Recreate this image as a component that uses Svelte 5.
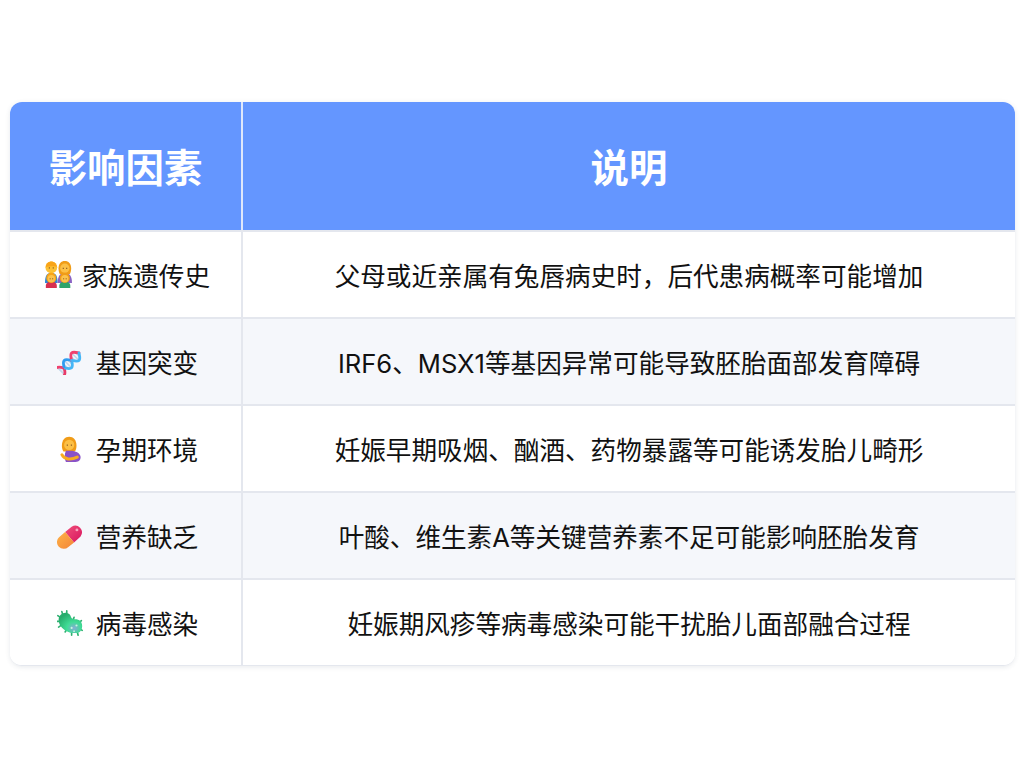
<script>
  const rows = [
    { icon: 'family', name: '家族遗传史', text: '父母或近亲属有兔唇病史时，后代患病概率可能增加' },
    { icon: 'dna', name: '基因突变', text: 'IRF6、MSX1等基因异常可能导致胚胎面部发育障碍' },
    { icon: 'pregnant', name: '孕期环境', text: '妊娠早期吸烟、酗酒、药物暴露等可能诱发胎儿畸形' },
    { icon: 'pill', name: '营养缺乏', text: '叶酸、维生素A等关键营养素不足可能影响胚胎发育' },
    { icon: 'microbe', name: '病毒感染', text: '妊娠期风疹等病毒感染可能干扰胎儿面部融合过程' },
  ];
</script>

{#snippet icon(kind)}
  <svg class="emoji" class:family={kind === 'family'} viewBox="0 0 32 32" aria-hidden="true">
    {#if kind === 'family'}
      <!-- back pair -->
      <path d="M0 26c0-8 2-12 7.500-12S15 18 15 26z" fill="#2f86d6" />
      <path d="M15 26c0-8 3-12 8.500-12S32 18 32 26z" fill="#8a63c4" />
      <circle cx="7.500" cy="7.500" r="7" fill="#fcc034" />
      <path d="M1 7C1 3 4 .5 7.500 .5S14 3 14 7c-3-1-9-1-13 0z" fill="#f9a418" />
      <path d="M16 9c0-6 3-9 7.500-9S31 3 31 9c0 3-.8 5-1.500 6.500h-12C16.800 14 16 12 16 9z" fill="#f09c18" />
      <circle cx="23.500" cy="8.500" r="5.500" fill="#fcc046" />
      <!-- front pair -->
      <path d="M1 32v-3c0-3 2-4.500 6.500-4.500S14 26 14 29v3z" fill="#d8304f" />
      <path d="M17 32v-3c0-3 2-4.500 6.500-4.500S30 26 30 29v3z" fill="#2ea36b" />
      <circle cx="7.500" cy="20" r="6" fill="#f9a418" />
      <circle cx="7.500" cy="21" r="4.300" fill="#fcc34c" />
      <circle cx="23.500" cy="20" r="6" fill="#f09c18" />
      <circle cx="23.500" cy="21" r="4.300" fill="#fcc34c" />
      <g fill="#8a5a24">
        <rect x="4.500" y="7.500" width="1.400" height="1.400" />
        <rect x="9.100" y="7.500" width="1.400" height="1.400" />
        <rect x="21" y="8" width="1.400" height="1.400" />
        <rect x="25" y="8" width="1.400" height="1.400" />
        <rect x="5.500" y="20.500" width="1.200" height="1.200" />
        <rect x="8.500" y="20.500" width="1.200" height="1.200" />
        <rect x="21.500" y="20.500" width="1.200" height="1.200" />
        <rect x="24.500" y="20.500" width="1.200" height="1.200" />
      </g>
    {:else if kind === 'dna'}
      <!-- helix drawn along a horizontal axis, then turned onto the diagonal -->
      <g transform="rotate(-45 16 16) translate(16 16) scale(.92) translate(-16 -16)" fill="none" stroke-width="3.800">
        <path d="M-1 10v12M2 11v10M8 12v8M12 9v14M16 12v8M22 11v10M26 9v14M30 12v8" stroke="#c4d6ec" stroke-width="2.200" />
        <path d="M-2 9C1 9 3 13 5 16" stroke="#f0406e" stroke-linecap="round" />
        <path d="M-2 23C1 23 3 19 5 16" stroke="#e83a68" stroke-linecap="round" />
        <path d="M5 16C7 19 9 23 12 23 15 23 17 19 19 16" stroke="#46b6f6" />
        <path d="M5 16C7 13 9 9 12 9 15 9 17 13 19 16" stroke="#2f9cf0" />
        <path d="M19 16C21 13 23 9 26 9 29 9 31 13 33 16" stroke="#f0406e" stroke-linecap="round" />
        <path d="M19 16C21 19 23 23 26 23 29 23 31 19 33 16" stroke="#46b6f6" stroke-linecap="round" />
      </g>
    {:else if kind === 'pregnant'}
      <path d="M6 12C6 5 10 1 15 1s9 4 9 11c0 3-1 6-2 7H8c-1-1-2-4-2-7z" fill="#f09c18" />
      <circle cx="15" cy="11" r="6.300" fill="#fcc046" />
      <path d="M11 18h8c6 1 10 4 10 8 0 4-3 6-8 6H11c-2-4-2-10 0-14z" fill="#8a52c8" />
      <path d="M6 23c3 6 11 7 19 3" fill="none" stroke="#f8ac20" stroke-width="3.600" stroke-linecap="round" />
      <g fill="#8a5a24">
        <rect x="12" y="10.500" width="1.500" height="1.500" />
        <rect x="17" y="10.500" width="1.500" height="1.500" />
      </g>
    {:else if kind === 'pill'}
      <defs>
        <linearGradient id="pillTop" x1="0" y1="0" x2="1" y2="1">
          <stop offset="0" stop-color="#f0507a" />
          <stop offset="1" stop-color="#d8155f" />
        </linearGradient>
        <linearGradient id="pillBottom" x1="0" y1="0" x2="1" y2="1">
          <stop offset="0" stop-color="#ffb347" />
          <stop offset="1" stop-color="#f2853a" />
        </linearGradient>
      </defs>
      <path d="M10 11L18 4.500a8.300 8.300 0 0 1 11 12L21 24z" fill="url(#pillTop)" />
      <path d="M10 11l11 13-7 5.500A8.300 8.300 0 0 1 2.500 17.500z" fill="url(#pillBottom)" />
      <circle cx="24.500" cy="8.500" r="1.800" fill="#f7a3bd" />
    {:else}
      <defs>
        <radialGradient id="microbeBody" cx="0.650" cy="0.750" r="0.750">
          <stop offset="0" stop-color="#86abd6" />
          <stop offset="0.400" stop-color="#40dc96" />
          <stop offset="1" stop-color="#26ad6c" />
        </radialGradient>
      </defs>
      <path d="M6 2l1 4M1 7l3 2M0 14l4 0M2 21l3-2M12 1v4M10 27l2-3M18 31l0-4M26 31l-1-4M31 25l-3-2M30 13l-3 3M21 9l-1 3" stroke="#2fb070" stroke-width="2" stroke-linecap="round" />
      <path d="M2 12c0-6 6-10 11-8 5 1.500 3 6 7 7 3 .5 5 0 8 2 4 3 4 11 0 14-4 2.500-12 1.500-16-1C6 23 2 18 2 12z" fill="url(#microbeBody)" />
      <g fill="#c9f2e0">
        <circle cx="18" cy="22" r="1.300" />
        <circle cx="24" cy="19" r="1.300" />
        <circle cx="21" cy="26" r="1.100" />
      </g>
    {/if}
  </svg>
{/snippet}

<div class="page">
  <div class="card">
    <div class="head-row">
      <div class="cell name">影响因素</div>
      <div class="cell desc">说明</div>
    </div>
    {#each rows as row, i (row.name)}
      <div class="row" class:even={i % 2 === 1}>
        <div class="cell name">{@render icon(row.icon)}{row.name}</div>
        <div class="cell desc">{row.text}</div>
      </div>
    {/each}
  </div>
</div>

<style>
  :global(body) {
    background: #fff;
    font-family: Inter, "Noto Sans CJK SC", sans-serif;
  }

  .page {
    height: 768px;
    box-sizing: border-box;
    padding: 102px 9px 0 10px;
  }

  .card {
    border-radius: 12px;
    overflow: hidden;
    border-bottom: 1px solid #e4e7ee;
    box-shadow: 0 1px 5px rgba(60, 70, 100, 0.12);
  }

  .head-row,
  .row {
    display: grid;
    grid-template-columns: 233px 1fr;
  }

  .cell {
    display: flex;
    align-items: center;
    justify-content: center;
    box-sizing: border-box;
  }

  .head-row {
    height: 128px;
    background: #6496ff;
    color: #fff;
    font-size: 38.400px;
    font-weight: 700;
  }

  .head-row .cell {
    padding-bottom: 3px;
  }

  .head-row .name {
    border-right: 2px solid #dfe7fb;
  }

  .row {
    height: 87px;
    background: #fff;
    color: #111;
    font-size: 25.600px;
    border-top: 2px solid #e4e7ee;
    box-sizing: border-box;
  }

  .row.even {
    background: #f5f7fb;
  }

  .row .name {
    border-right: 2px solid #e4e7ee;
    padding-left: 4px;
  }

  .emoji {
    width: 26px;
    height: 26px;
    margin-right: 13px;
    flex: none;
  }

  .emoji.family {
    width: 27px;
    height: 27px;
    margin-right: 10px;
  }
</style>
